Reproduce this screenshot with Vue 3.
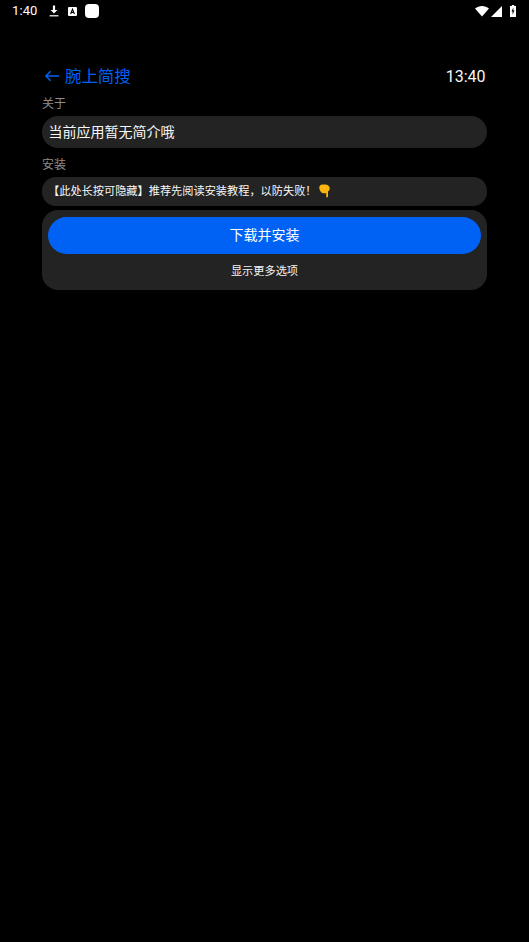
<script setup>
const hint = '【此处长按可隐藏】推荐先阅读安装教程，以防失败！'
</script>

<template>
  <div class="screen">
    <header class="status">
      <div class="status-left">
        <span class="clock">1:40</span>
        <svg class="ic-dl" width="10" height="12" viewBox="0 0 10 12"><path d="M3.9 0.5h2.2v4.6h2.3L5 8.6 1.6 5.1h2.3z" fill="#fff"/><rect x="0.6" y="10.2" width="8.8" height="1.2" fill="#fff"/></svg>
        <svg class="ic-a" width="9" height="9" viewBox="0 0 9 9"><rect x="0" y="0" width="9" height="9" rx="1" fill="#fff"/><path d="M2.6 7 4.5 2.2 6.4 7M3.3 5.5h2.4" fill="none" stroke="#000" stroke-width="1.1"/></svg>
        <span class="app-square"></span>
      </div>
      <div class="status-right">
        <svg width="14" height="11" viewBox="0 0 14 11"><path d="M0 2.6C4 -0.8 10 -0.8 14 2.6L7 10.6z" fill="#fff"/></svg>
        <svg width="11" height="11" viewBox="0 0 11 11"><path d="M11 0v11H0z" fill="#fff"/></svg>
        <svg class="ic-bat" width="6" height="12" viewBox="0 0 6 12"><path d="M1.8 0h2.4v1H6v11H0V1h1.8z" fill="#fff"/><path d="M3.4 2.4 1.5 6.6h1.2L2.4 9.8l2.1-4.4H3.3z" fill="#000"/></svg>
      </div>
    </header>

    <main class="content">
      <div class="title-row">
        <div class="back">
          <svg class="arrow" width="16" height="12" viewBox="0 0 16 12"><path d="M15 6H2M6.6 1.2 1.8 6l4.8 4.8" fill="none" stroke="#0062f5" stroke-width="1.4"/></svg>
          <span class="title">腕上简搜</span>
        </div>
        <span class="time">13:40</span>
      </div>

      <div class="label first">关于</div>
      <div class="about">当前应用暂无简介哦</div>

      <div class="label second">安装</div>
      <div class="hint"><span class="hint-text">{{ hint }}</span><span class="emoji">
        <svg width="11" height="14" viewBox="0 0 11 14"><path d="M.3 3.4C.3 1.4 1.8.4 3.4.4h2.8c2.4 0 4.4 1.6 4.5 3.8.1 1.5-.6 2.6-1.7 3.2v5.2c0 .5-.4.9-.9.9s-.9-.4-.9-.9V9.3H5.4C2.6 9.3.3 6.8.3 3.4z" fill="#fcb40f"/></svg>
      </span></div>

      <section class="install">
        <button class="primary">下载并安装</button>
        <div class="more">显示更多选项</div>
      </section>
    </main>
  </div>
</template>

<style scoped>
.screen {
  width: 529px;
  height: 942px;
  background: #000;
  color: #fff;
  font-family: Roboto, "Noto Sans CJK SC", sans-serif;
  overflow: hidden;
}
.status {
  height: 22px;
  display: flex;
  justify-content: space-between;
  align-items: center;
  padding: 0 13px 0 12px;
}
.status-left, .status-right { display: flex; align-items: center; }
.clock { font-size: 13px; font-weight: 400; width: 37px; line-height: 22px; letter-spacing: .1px; }
.ic-a { margin-left: 9px; }
.app-square { width: 14px; height: 14px; border-radius: 4px; background: #fff; margin-left: 8px; }
.status-right { gap: 2px; }
.ic-bat { margin-left: 6px; }
.content { padding: 44px 42px 0; }
.title-row {
  display: flex;
  justify-content: space-between;
  align-items: center;
  height: 22px;
  padding: 0 1.5px 0 2px;
}
.back { display: flex; align-items: center; gap: 5px; color: #0062f5; }
.arrow { margin-top: -2px; }
.title { font-size: 16.4px; line-height: 22px; }
.time { font-size: 16px; line-height: 22px; color: #f6f6f6; }
.label { font-size: 12px; line-height: 16px; color: #8c8c8c; }
.first { margin-top: 8px; }
.second { margin-top: 9px; }
.about {
  margin-top: 4px;
  height: 32px;
  line-height: 32px;
  border-radius: 16px;
  background: #232323;
  padding: 0 6.5px;
  font-size: 14px;
  color: #f8f8f8;
}
.hint {
  margin-top: 4px;
  height: 28.5px;
  border-radius: 14px;
  background: #232323;
  padding: 0 7px 0 6px;
  font-size: 11.2px;
  color: #f8f8f8;
  display: flex;
  align-items: center;
}
.hint-text { line-height: 16px; padding-top: 1px; }
.emoji { display: inline-flex; margin-left: 2px; }
.install {
  margin-top: 4.5px;
  height: 80px;
  border-radius: 16px;
  background: #232323;
  padding: 7px 6px 0;
  box-sizing: border-box;
  display: flex;
  flex-direction: column;
}
.primary {
  height: 37px;
  border: 0;
  border-radius: 18.5px;
  background: #0062f5;
  color: #fff;
  font: inherit;
  font-size: 14px;
  padding: 0 0 4px;
}
.more {
  margin-top: 10px;
  text-align: center;
  font-size: 11.2px;
  line-height: 16px;
  color: #f4f4f4;
}
</style>
